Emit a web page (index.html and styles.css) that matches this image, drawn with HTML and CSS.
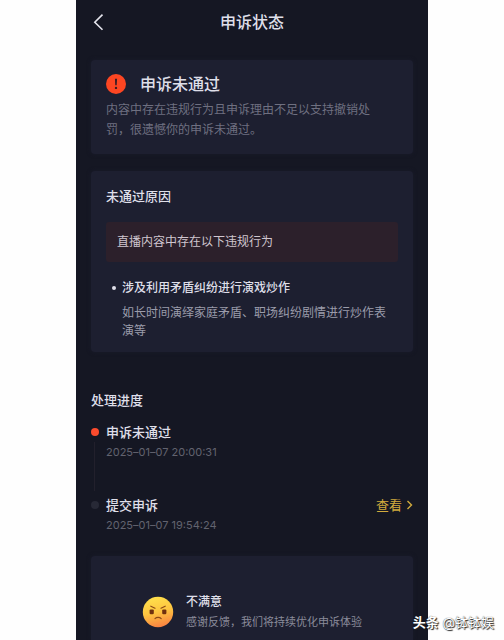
FILE: index.html
```html
<!DOCTYPE html>
<html lang="zh-CN">
<head>
<meta charset="utf-8">
<meta name="viewport" content="width=device-width, initial-scale=1">
<title>申诉状态</title>
<link rel="stylesheet" href="styles.css">
</head>
<body>
<div class="app">
  <header class="topbar">
    <button class="back" type="button" aria-label="返回">
      <svg width="12" height="18" viewBox="0 0 12 18" fill="none" stroke="currentColor" stroke-width="1.6"><path d="M10.5 1.6 2.8 9.2l7.7 7.6"/></svg>
    </button>
    <h1 class="title">申诉状态</h1>
  </header>

  <main class="content">
    <section class="card result">
      <h2 class="result-title">
        <svg width="20" height="20" viewBox="0 0 20 20" aria-hidden="true"><circle cx="10" cy="10" r="10" fill="#fd4622"/><path d="M8.9 4.8h2.2l-.4 6.4H9.3z" fill="#391d25"/><circle cx="10" cy="13.9" r="1.2" fill="#391d25"/></svg>
        申诉未通过
      </h2>
      <p class="result-text">内容中存在违规行为且申诉理由不足以支持撤销处罚，很遗憾你的申诉未通过。</p>
    </section>

    <section class="card reason">
      <h2 class="heading">未通过原因</h2>
      <p class="alert">直播内容中存在以下违规行为</p>
      <ul class="violations">
        <li>
          <h3 class="violation-title">涉及利用矛盾纠纷进行演戏炒作</h3>
          <p class="violation-text">如长时间演绎家庭矛盾、职场纠纷剧情进行炒作表演等</p>
        </li>
      </ul>
    </section>

    <section class="progress">
      <h2 class="heading">处理进度</h2>
      <ol class="timeline">
        <li class="step current">
          <div>
            <h3 class="heading">申诉未通过</h3>
            <time class="time">2025–01–07 20:00:31</time>
          </div>
        </li>
        <li class="step">
          <div>
            <h3 class="heading">提交申诉</h3>
            <time class="time">2025–01–07 19:54:24</time>
          </div>
          <a class="view" href="#">查看
            <svg width="7" height="10" viewBox="0 0 7 10" fill="none" stroke="currentColor" stroke-width="1.4"><path d="m1.5 1 4 4-4 4"/></svg>
          </a>
        </li>
      </ol>
    </section>

    <section class="card feedback">
      <svg class="face" width="32" height="32" viewBox="0 0 32 32" aria-hidden="true">
        <defs>
          <linearGradient id="skin" x1="0.35" y1="0" x2="0.6" y2="1">
            <stop offset="0" stop-color="#ffe04c"/>
            <stop offset="0.5" stop-color="#fdc440"/>
            <stop offset="1" stop-color="#fa8042"/>
          </linearGradient>
        </defs>
        <circle cx="16" cy="16" r="15.2" fill="url(#skin)"/>
        <g fill="none" stroke="#8c4a16" stroke-width="1.2" stroke-linecap="round">
          <path d="m8.8 10.2 4.2 2M23.2 10.2l-4.2 2"/>
          <path d="M13 22.6c1.6-1.6 4.6-1.6 6.2 0"/>
        </g>
        <rect x="7.6" y="13.4" width="4.2" height="4.8" rx="1.2" fill="#70300f"/>
        <rect x="20.2" y="13.4" width="4.2" height="4.8" rx="1.2" fill="#70300f"/>
      </svg>
      <div>
        <h2 class="feedback-title">不满意</h2>
        <p class="feedback-text">感谢反馈，我们将持续优化申诉体验</p>
      </div>
    </section>
  </main>
</div>
<div class="watermark"><b>头条</b> <span>@钵钵娱</span></div>
</body>
</html>
```
FILE: styles.css
```css
* {
  box-sizing: border-box;
}

body,
h1,
h2,
h3,
p,
ul,
ol {
  margin: 0;
  padding: 0;
}

body {
  background: #fefefe;
  color: #dfdfe9;
  font-family: Inter, "Noto Sans CJK SC", sans-serif;
  font-size: 12px;
  line-height: 20px;
}

ul,
ol {
  list-style: none;
}

.app {
  display: flex;
  flex-direction: column;
  min-height: 100vh;
  margin: 0 76px;
  background: #151723;
}

.topbar {
  display: grid;
  grid-template-columns: 44px 1fr 44px;
  align-items: center;
  height: 44px;
}

.back {
  display: flex;
  padding: 0 0 0 16px;
  border: 0;
  background: none;
  color: #e4e4ec;
}

.title {
  font-size: 16px;
  font-weight: 500;
  text-align: center;
}

.content {
  display: flex;
  flex: 1;
  flex-direction: column;
  padding: 16px 15px 0;
}

.card {
  padding: 12px 15px;
  border-radius: 4px;
  background: #1d1f30;
  box-shadow: 0 0 4px #1a1c2b;
}

.result-title {
  display: flex;
  align-items: center;
  gap: 14px;
  height: 24px;
  margin-bottom: 4px;
  font-size: 16px;
  font-weight: 500;
}

.result-text {
  padding: 0 20px 2px 0;
  color: #6f7080;
}

.reason {
  margin-top: 17px;
  padding-top: 15px;
}

.heading {
  font-size: 13px;
  font-weight: 500;
}

.alert {
  margin: 16px 0;
  padding: 10px 11px;
  border-radius: 3px;
  background: #2c202b;
  color: #d0c6cf;
}

.violations li {
  padding: 0 8px 0 16px;
}

.violation-title {
  display: flex;
  align-items: center;
  margin-bottom: 6px;
  font-size: 12px;
  font-weight: 500;
}

.violation-title::before {
  content: "";
  width: 4px;
  height: 4px;
  margin-left: -10px;
  margin-right: 6px;
  border-radius: 50%;
  background: #dfdfe9;
}

.violation-text {
  color: #9b9cab;
  line-height: 18px;
}

.progress {
  margin-top: 38px;
}

.timeline {
  margin-top: 12px;
}

.step {
  display: flex;
  align-items: flex-start;
  justify-content: space-between;
  position: relative;
  min-height: 61px;
  padding-left: 15px;
}

.step::before {
  content: "";
  position: absolute;
  top: 6px;
  left: 0;
  width: 8px;
  height: 8px;
  border-radius: 50%;
  background: #272936;
}

.step.current {
  min-height: 73px;
}

.step.current::before {
  background: #fb4b2d;
}

.step.current::after {
  content: "";
  position: absolute;
  top: 20px;
  bottom: 4px;
  left: 3px;
  width: 1px;
  background: #22202c;
}

.time {
  display: block;
  color: #62636f;
  font-size: 11px;
}

.view {
  display: flex;
  align-items: center;
  gap: 4px;
  color: #d2ab3d;
  font-size: 13px;
  text-decoration: none;
}

.feedback {
  display: flex;
  flex: 1;
  justify-content: center;
  align-items: flex-end;
  gap: 12px;
  padding: 34px 0 8px;
  border-radius: 4px 4px 0 0;
}

.face {
  flex: none;
  margin-bottom: 4px;
}

.feedback-title {
  font-size: 12px;
  font-weight: 500;
}

.feedback-text {
  color: #8a8b9a;
  font-size: 11px;
}

.watermark {
  position: absolute;
  right: 10px;
  bottom: 8px;
  color: #fff;
  font-size: 13px;
  text-shadow: 1px 1px 1px #222, 0 0 1px #333;
}

.watermark b {
  font-weight: 700;
}
```
